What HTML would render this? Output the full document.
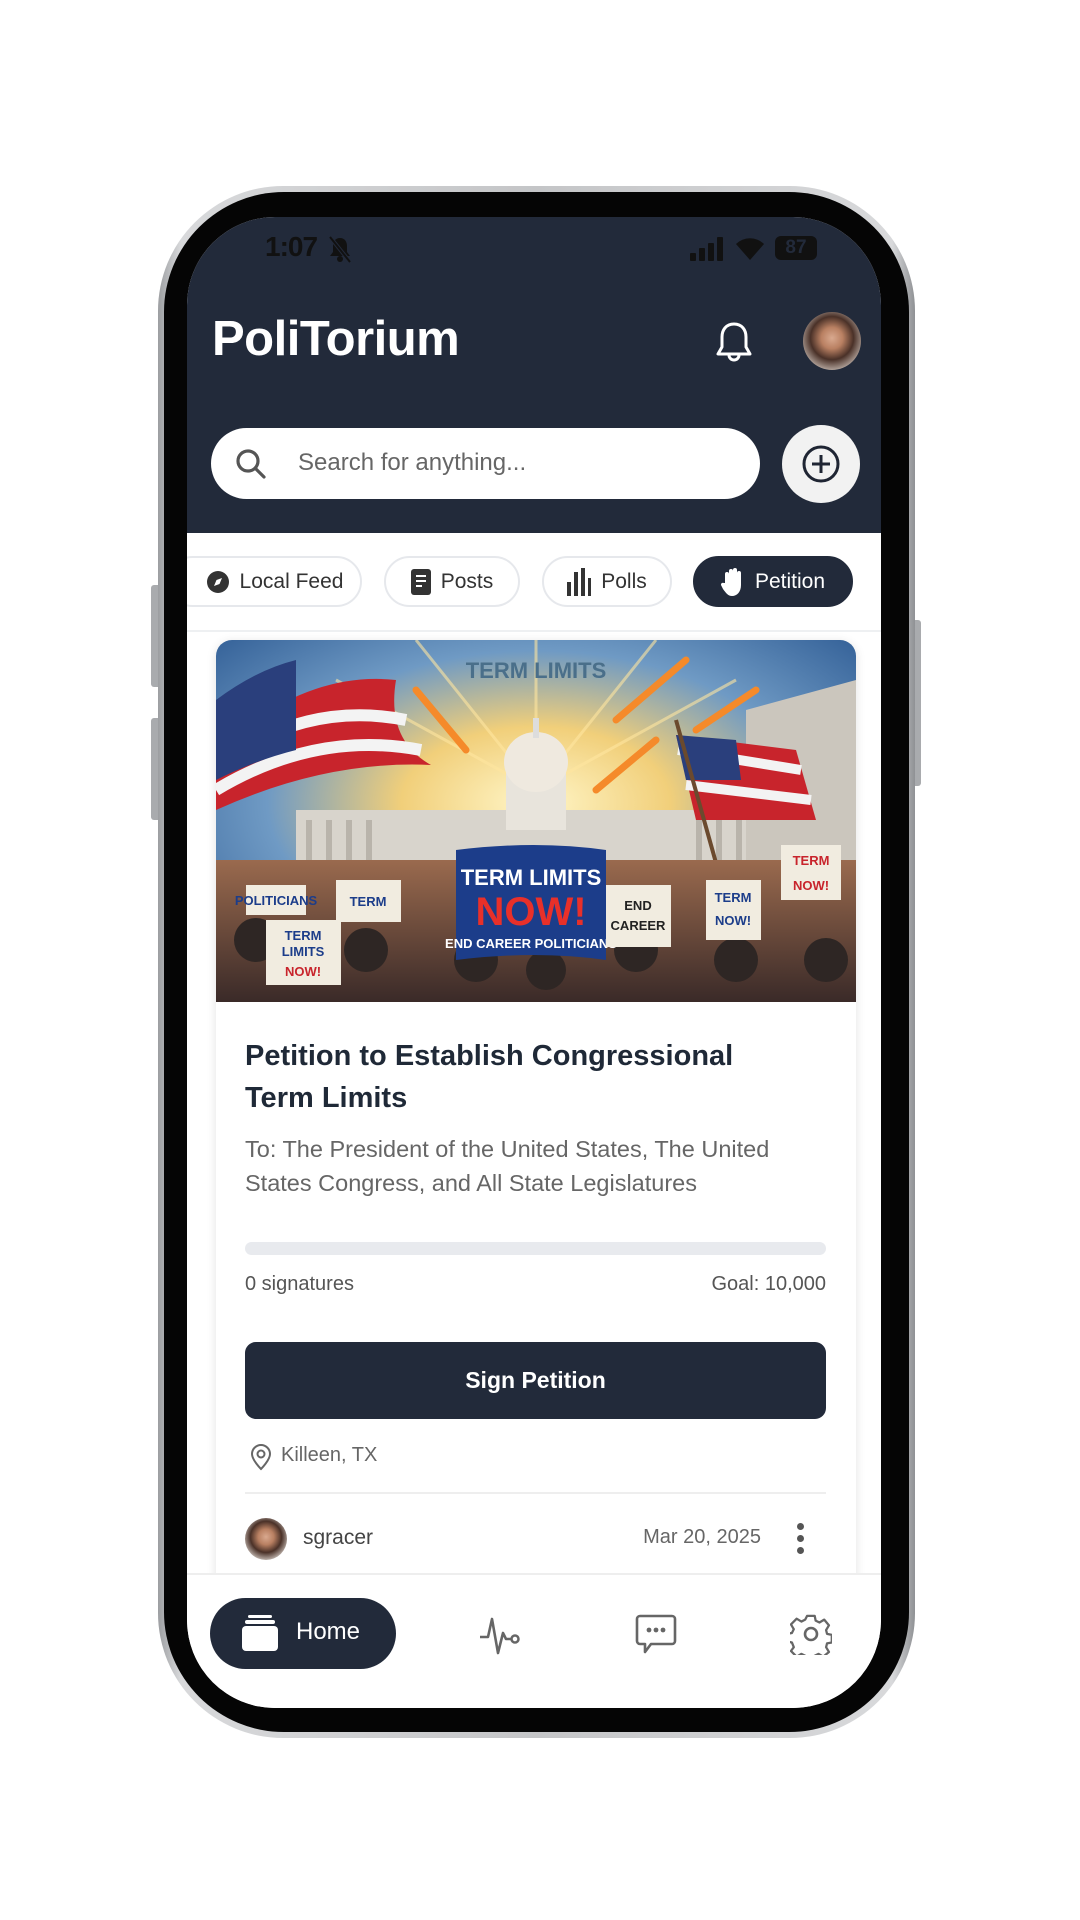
<!DOCTYPE html>
<html><head><meta charset="utf-8"><style>
*{margin:0;padding:0;box-sizing:border-box}
body{width:1080px;height:1920px;background:#fff;position:relative;overflow:hidden;font-family:"Liberation Sans",sans-serif}
.abs{position:absolute}
.btn{position:absolute;background:#a9abae;border-radius:3px}
.chip{position:absolute;top:556px;height:51px;border:2px solid #e6e8ec;border-radius:26px;display:flex;align-items:center;justify-content:center;font-size:21px;color:#333;gap:10px;background:#fff}
</style></head><body>
<div class="btn" style="left:151px;top:585px;width:12px;height:102px"></div>
<div class="btn" style="left:151px;top:718px;width:12px;height:102px"></div>
<div class="btn" style="left:910px;top:620px;width:11px;height:166px"></div>
<div class="abs" style="left:158px;top:186px;width:757px;height:1552px;border-radius:125px;background:linear-gradient(90deg,#9c9ea1,#d8d9db 3%,#c4c5c7 50%,#d8d9db 97%,#8f9194)"></div>
<div class="abs" style="left:164px;top:192px;width:745px;height:1540px;border-radius:120px;background:#050505"></div>
<div class="abs" style="left:187px;top:217px;width:694px;height:1491px;border-radius:88px;background:#fff;overflow:hidden">
  <div class="abs" style="left:0;top:0;width:694px;height:316px;background:#222a3a"></div>
  <div class="abs" style="left:78px;top:14px;font-size:28px;color:#111;font-weight:bold;letter-spacing:-1px">1:07</div>
  <svg class="abs" style="left:140px;top:18px" width="26" height="28" viewBox="0 0 26 28"><path d="M13 3c-5 0-7 4-7 8v6l-3 4h20l-3-4v-6c0-4-2-8-7-8z" fill="#111"/><circle cx="13" cy="24" r="3" fill="#111"/><line x1="3" y1="2" x2="23" y2="27" stroke="#222a3a" stroke-width="4"/><line x1="3" y1="2" x2="23" y2="27" stroke="#111" stroke-width="2"/></svg>
  <svg class="abs" style="left:503px;top:20px" width="36" height="24"><rect x="0" y="16" width="6" height="8" rx="1" fill="#111"/><rect x="9" y="11" width="6" height="13" rx="1" fill="#111"/><rect x="18" y="6" width="6" height="18" rx="1" fill="#111"/><rect x="27" y="0" width="6" height="24" rx="1" fill="#111"/></svg>
  <svg class="abs" style="left:547px;top:18px" width="32" height="26" viewBox="0 0 32 26"><path d="M16 25 L2 9 A20 20 0 0 1 30 9 Z" fill="#111"/></svg>
  <div class="abs" style="left:588px;top:19px;width:42px;height:24px;background:#111;border-radius:6px;color:#222a3a;font-size:19px;font-weight:bold;text-align:center;line-height:24px">87</div>
  <div class="abs" style="left:25px;top:94px;font-size:49px;font-weight:bold;color:#fff;letter-spacing:-0.5px">PoliTorium</div>
  <svg class="abs" style="left:527px;top:104px" width="40" height="44" viewBox="0 0 40 44"><path d="M20 3c-8 0-12 6-12 13v10l-4 7h32l-4-7V16c0-7-4-13-12-13z" fill="none" stroke="#fff" stroke-width="3" stroke-linejoin="round"/><path d="M15 34a5 5 0 0 0 10 0" fill="none" stroke="#fff" stroke-width="3"/></svg>
  <div class="abs" style="left:616px;top:95px;width:58px;height:58px;border-radius:50%;background:radial-gradient(circle at 50% 45%,#d9a98f 0,#b98062 25%,#4a3128 50%,#c8bcb4 80%)"></div>
  <div class="abs" style="left:24px;top:211px;width:549px;height:71px;background:#fff;border-radius:36px"></div>
  <svg class="abs" style="left:47px;top:230px" width="34" height="34" viewBox="0 0 34 34"><circle cx="14" cy="14" r="10" fill="none" stroke="#555" stroke-width="3.2"/><line x1="21.5" y1="21.5" x2="30" y2="30" stroke="#555" stroke-width="3.2" stroke-linecap="round"/></svg>
  <div class="abs" style="left:111px;top:232px;font-size:24px;color:#666">Search for anything...</div>
  <div class="abs" style="left:595px;top:208px;width:78px;height:78px;border-radius:50%;background:#f2f2f2"></div>
  <svg class="abs" style="left:614px;top:227px" width="40" height="40" viewBox="0 0 40 40"><circle cx="20" cy="20" r="17" fill="none" stroke="#1f2533" stroke-width="3"/><path d="M20 11v18M11 20h18" stroke="#1f2533" stroke-width="3"/></svg>
  <div class="chip" style="left:-20px;width:195px;top:339px;padding-left:20px"><svg width="24" height="24" viewBox="0 0 24 24"><circle cx="12" cy="12" r="11" fill="#333"/><path d="M16 8l-2.5 6L8 16l2.5-6z" fill="#fff"/></svg>Local Feed</div>
  <div class="chip" style="left:197px;width:136px;top:339px"><svg width="20" height="26" viewBox="0 0 20 26"><rect x="0" y="0" width="20" height="26" rx="3" fill="#333"/><path d="M5 7h10M5 12h10M5 17h6" stroke="#fff" stroke-width="2"/></svg>Posts</div>
  <div class="chip" style="left:355px;width:130px;top:339px"><svg width="24" height="28" viewBox="0 0 24 28"><rect x="0" y="14" width="4" height="14" fill="#333"/><rect x="7" y="4" width="4" height="24" fill="#333"/><rect x="14" y="0" width="4" height="28" fill="#333"/><rect x="21" y="10" width="3" height="18" fill="#333"/></svg>Polls</div>
  <div class="chip" style="left:506px;width:160px;top:339px;background:#222a3a;border-color:#222a3a;color:#fff"><svg width="24" height="30" viewBox="0 0 24 30"><path d="M4 16V7a2 2 0 0 1 4 0v7V4a2 2 0 0 1 4 0v10V3a2 2 0 0 1 4 0v11V6a2 2 0 0 1 4 0v12c0 7-4 11-9 11-4 0-6-3-9-7l-2-4a2 2 0 0 1 3-2z" fill="#fff"/></svg>Petition</div>
  <div class="abs" style="left:0;top:413px;width:694px;height:2px;background:#eef0f2"></div>
  <div class="abs" style="left:29px;top:423px;width:640px;height:1000px;background:#fff;border-radius:16px;box-shadow:0 2px 10px rgba(0,0,0,0.12);overflow:hidden">
    <svg width="640" height="362" viewBox="0 0 640 362" style="display:block">
      <defs>
        <radialGradient id="sky" cx="0.5" cy="0.45" r="0.7"><stop offset="0" stop-color="#fff6c8"/><stop offset="0.3" stop-color="#f1cf7a"/><stop offset="0.6" stop-color="#6f9ac4"/><stop offset="1" stop-color="#2f5c94"/></radialGradient>
        <linearGradient id="crowd" x1="0" y1="0" x2="0" y2="1"><stop offset="0" stop-color="#9a6a4e"/><stop offset="1" stop-color="#3a2a28"/></linearGradient>
      </defs>
      <rect width="640" height="362" fill="url(#sky)"/>
      <g stroke="#ffe6a0" stroke-width="3" opacity="0.6"><line x1="320" y1="150" x2="200" y2="0"/><line x1="320" y1="150" x2="440" y2="0"/><line x1="320" y1="150" x2="320" y2="0"/><line x1="320" y1="150" x2="520" y2="40"/><line x1="320" y1="150" x2="120" y2="40"/></g>
      <g stroke="#f58a2a" stroke-width="7" stroke-linecap="round"><line x1="400" y1="80" x2="470" y2="20"/><line x1="480" y1="90" x2="540" y2="50"/><line x1="380" y1="150" x2="440" y2="100"/><line x1="200" y1="50" x2="250" y2="110"/></g>
      <text x="320" y="38" font-size="22" font-weight="bold" fill="#4a6f8a" text-anchor="middle" font-family="Liberation Sans">TERM LIMITS</text>
      <rect x="80" y="170" width="480" height="80" fill="#d8d4cc"/>
      <g fill="#b9b4ab"><rect x="90" y="180" width="6" height="60"/><rect x="110" y="180" width="6" height="60"/><rect x="130" y="180" width="6" height="60"/><rect x="150" y="180" width="6" height="60"/><rect x="480" y="180" width="6" height="60"/><rect x="500" y="180" width="6" height="60"/><rect x="520" y="180" width="6" height="60"/></g>
      <rect x="290" y="120" width="60" height="70" fill="#e8e4dc"/>
      <ellipse cx="320" cy="122" rx="32" ry="30" fill="#efe9df"/>
      <rect x="317" y="78" width="6" height="20" fill="#ddd"/>
      <path d="M530 70 L640 40 L640 250 L530 250Z" fill="#cbc6bd"/>
      <path d="M0 110 Q90 30 180 40 Q170 100 215 125 Q110 120 0 170Z" fill="#c8242c"/>
      <path d="M0 125 Q90 60 190 80 M0 150 Q100 90 205 110" stroke="#f3f3f3" stroke-width="12" fill="none"/>
      <path d="M0 60 Q40 30 80 20 L80 110 Q40 120 0 140Z" fill="#2a3f7c"/>
      <path d="M460 95 L580 110 L600 180 L480 180Z" fill="#c8242c"/>
      <path d="M462 110 L585 130 M470 145 L595 160" stroke="#f3f3f3" stroke-width="10" fill="none"/>
      <path d="M460 95 L520 100 L525 140 L470 140Z" fill="#2a3f7c"/>
      <line x1="460" y1="80" x2="530" y2="330" stroke="#6b4a2e" stroke-width="4"/>
      <rect x="0" y="220" width="640" height="142" fill="url(#crowd)"/>
      <g fill="#2e2624"><circle cx="40" cy="300" r="22"/><circle cx="150" cy="310" r="22"/><circle cx="260" cy="320" r="22"/><circle cx="330" cy="330" r="20"/><circle cx="420" cy="310" r="22"/><circle cx="520" cy="320" r="22"/><circle cx="610" cy="320" r="22"/></g>
      <path d="M240 210 Q320 200 390 210 L390 320 Q320 310 240 320Z" fill="#1c3d8a"/>
      <text x="315" y="245" font-size="22" font-weight="bold" fill="#fff" text-anchor="middle" font-family="Liberation Sans">TERM LIMITS</text>
      <text x="315" y="285" font-size="40" font-weight="bold" fill="#e8302a" text-anchor="middle" font-family="Liberation Sans">NOW!</text>
      <text x="315" y="308" font-size="13" font-weight="bold" fill="#fff" text-anchor="middle" font-family="Liberation Sans">END CAREER POLITICIANS</text>
      <g font-family="Liberation Sans" font-weight="bold" font-size="13" text-anchor="middle">
        <rect x="50" y="280" width="75" height="65" fill="#f1ece0"/><text x="87" y="300" fill="#1c3d8a">TERM</text><text x="87" y="316" fill="#1c3d8a">LIMITS</text><text x="87" y="336" fill="#c8242c">NOW!</text>
        <rect x="120" y="240" width="65" height="42" fill="#f1ece0"/><text x="152" y="266" fill="#1c3d8a">TERM</text>
        <rect x="390" y="245" width="65" height="62" fill="#f1ece0"/><text x="422" y="270" fill="#222">END</text><text x="422" y="290" fill="#222">CAREER</text>
        <rect x="490" y="240" width="55" height="60" fill="#f1ece0"/><text x="517" y="262" fill="#1c3d8a">TERM</text><text x="517" y="285" fill="#1c3d8a">NOW!</text>
        <rect x="565" y="205" width="60" height="55" fill="#f1ece0"/><text x="595" y="225" fill="#c8242c">TERM</text><text x="595" y="250" fill="#c8242c">NOW!</text>
        <rect x="30" y="245" width="60" height="30" fill="#f1ece0"/><text x="60" y="265" fill="#1c3d8a">POLITICIANS</text>
      </g>
    </svg>
    <div class="abs" style="left:29px;top:395px;width:560px;font-size:29px;font-weight:bold;color:#1f2937;line-height:42px">Petition to Establish Congressional<br>Term Limits</div>
    <div class="abs" style="left:29px;top:492px;width:590px;font-size:23.5px;color:#666;line-height:34px">To: The President of the United States, The United States Congress, and All State Legislatures</div>
    <div class="abs" style="left:29px;top:602px;width:581px;height:13px;background:#e8eaee;border-radius:7px"></div>
    <div class="abs" style="left:29px;top:633px;font-size:20px;color:#555">0 signatures</div>
    <div class="abs" style="right:30px;top:633px;font-size:20px;color:#555">Goal: 10,000</div>
    <div class="abs" style="left:29px;top:702px;width:581px;height:77px;background:#222a3a;border-radius:11px;color:#fff;font-size:23px;font-weight:bold;text-align:center;line-height:77px">Sign Petition</div>
    <svg class="abs" style="left:34px;top:803px" width="22" height="28" viewBox="0 0 22 28"><path d="M11 26s-9-9-9-15a9 9 0 0 1 18 0c0 6-9 15-9 15z" fill="none" stroke="#666" stroke-width="2"/><circle cx="11" cy="11" r="3.5" fill="none" stroke="#666" stroke-width="2"/></svg>
    <div class="abs" style="left:65px;top:804px;font-size:20px;color:#666">Killeen, TX</div>
    <div class="abs" style="left:29px;top:852px;width:581px;height:2px;background:#eee"></div>
    <div class="abs" style="left:29px;top:878px;width:42px;height:42px;border-radius:50%;background:radial-gradient(circle at 50% 45%,#d9a98f 0,#b98062 25%,#4a3128 50%,#d8d0ca 80%)"></div>
    <div class="abs" style="left:87px;top:886px;font-size:21px;color:#444">sgracer</div>
    <div class="abs" style="right:95px;top:886px;font-size:20px;color:#666">Mar 20, 2025</div>
    <div class="abs" style="left:581px;top:883px;width:7px;height:7px;border-radius:50%;background:#555;box-shadow:0 12px 0 #555,0 24px 0 #555"></div>
  </div>
  <div class="abs" style="left:0;top:1356px;width:694px;height:140px;background:#fff;border-top:2px solid #eee"></div>
  <div class="abs" style="left:23px;top:1381px;width:186px;height:71px;background:#222a3a;border-radius:36px"></div>
  <svg class="abs" style="left:55px;top:1398px" width="36" height="36" viewBox="0 0 36 36"><rect x="6" y="0" width="24" height="3" rx="1.5" fill="#fff"/><rect x="3" y="5" width="30" height="4" rx="2" fill="#fff"/><rect x="0" y="11" width="36" height="25" rx="4" fill="#fff"/></svg>
  <div class="abs" style="left:109px;top:1401px;font-size:24px;color:#fff">Home</div>
  <svg class="abs" style="left:292px;top:1398px" width="42" height="40" viewBox="0 0 42 40"><path d="M1 22h8l4-18 6 34 5-20 3 6h5" fill="none" stroke="#666" stroke-width="2.6" stroke-linejoin="round"/><circle cx="36" cy="24" r="3.5" fill="none" stroke="#666" stroke-width="2.5"/></svg>
  <svg class="abs" style="left:448px;top:1396px" width="42" height="42" viewBox="0 0 42 42"><path d="M5 3h32a3 3 0 0 1 3 3v22a3 3 0 0 1-3 3H16l-6 8v-8H5a3 3 0 0 1-3-3V6a3 3 0 0 1 3-3z" fill="none" stroke="#666" stroke-width="2.6" stroke-linejoin="round"/><circle cx="14" cy="17" r="2.4" fill="#666"/><circle cx="21" cy="17" r="2.4" fill="#666"/><circle cx="28" cy="17" r="2.4" fill="#666"/></svg>
  <svg class="abs" style="left:603px;top:1396px" width="42" height="42" viewBox="0 0 42 42"><path d="M17 2h8l1 5 4 2 5-3 5 6-3 5 1 4 5 1v8l-5 1-1 4 3 5-6 5-5-3-4 2-1 5h-8l-1-5-4-2-5 3-6-6 3-4-2-5-5-1v-8l5-1 2-4-3-5 6-6 5 3 4-2z" fill="none" stroke="#666" stroke-width="2.4" stroke-linejoin="round" transform="scale(0.95) translate(1 1)"/><circle cx="21" cy="21" r="6" fill="none" stroke="#666" stroke-width="2.6"/></svg>
</div>
</body></html>
